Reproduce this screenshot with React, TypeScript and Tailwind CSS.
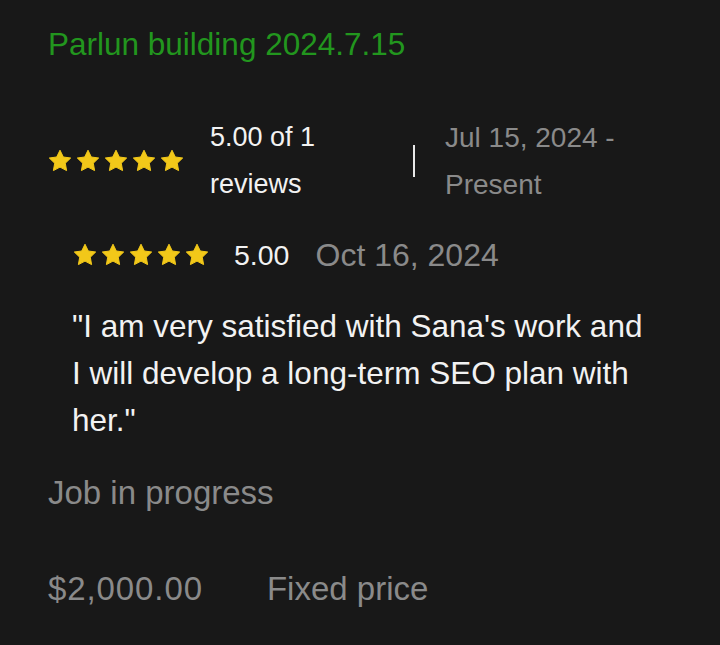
const Star = () => (
    <svg viewBox="0 0 24 24" className="w-[24px] h-[24px]" fill="#f2c819" stroke="#f2c819" strokeWidth="1" strokeLinejoin="round">
        <path d="M12 1.2l3.3 6.8 7.4 1-5.4 5.2 1.3 7.4L12 18.1l-6.6 3.5 1.3-7.4L1.3 9l7.4-1z" />
    </svg>
);

const Stars = () => (
    <div className="flex gap-[4px]">
        {[0, 1, 2, 3, 4].map((i) => (
            <Star key={i} />
        ))}
    </div>
);

const App = () => {
    return (
        <div
            className="w-[720px] h-[645px] bg-[#181818] text-white overflow-hidden"
            style={{ fontFamily: '"Liberation Sans", Arial, sans-serif' }}
        >
            <div className="pl-[48px] pt-[24px]">
                <h1 className="text-[31.5px] leading-[40px] text-[#22961e]">Parlun building 2024.7.15</h1>

                <div className="flex items-center mt-[50px]">
                    <Stars />
                    <p className="ml-[26px] text-[27px] leading-[47px] w-[203px] text-[#f2f2f2]">
                        5.00 of 1
                        <br />
                        reviews
                    </p>
                    <div className="w-[2px] h-[32px] bg-[#e8e8e8]" />
                    <p className="ml-[30px] text-[28px] leading-[47px] text-[#8a8a8a]">
                        Jul 15, 2024 -
                        <br />
                        Present
                    </p>
                </div>

                <div className="pl-[25px] mt-[27px] flex items-center">
                    <Stars />
                    <span className="ml-[25px] text-[28.5px] leading-[40px] text-[#f2f2f2]">5.00</span>
                    <span className="ml-[26px] text-[32px] leading-[40px] text-[#8a8a8a]">Oct 16, 2024</span>
                </div>

                <p className="pl-[24px] mt-[28px] text-[31.5px] leading-[47px] text-[#f2f2f2]">
                    "I am very satisfied with Sana's work and
                    <br />
                    I will develop a long-term SEO plan with
                    <br />
                    her."
                </p>

                <p className="mt-[29px] text-[33px] leading-[40px] text-[#8a8a8a]">Job in progress</p>

                <div className="flex mt-[56px] text-[33px] leading-[40px] text-[#8a8a8a]">
                    <span className="tracking-[0.9px]">$2,000.00</span>
                    <span className="ml-[64px]">Fixed price</span>
                </div>
            </div>
        </div>
    );
};

export default App;
